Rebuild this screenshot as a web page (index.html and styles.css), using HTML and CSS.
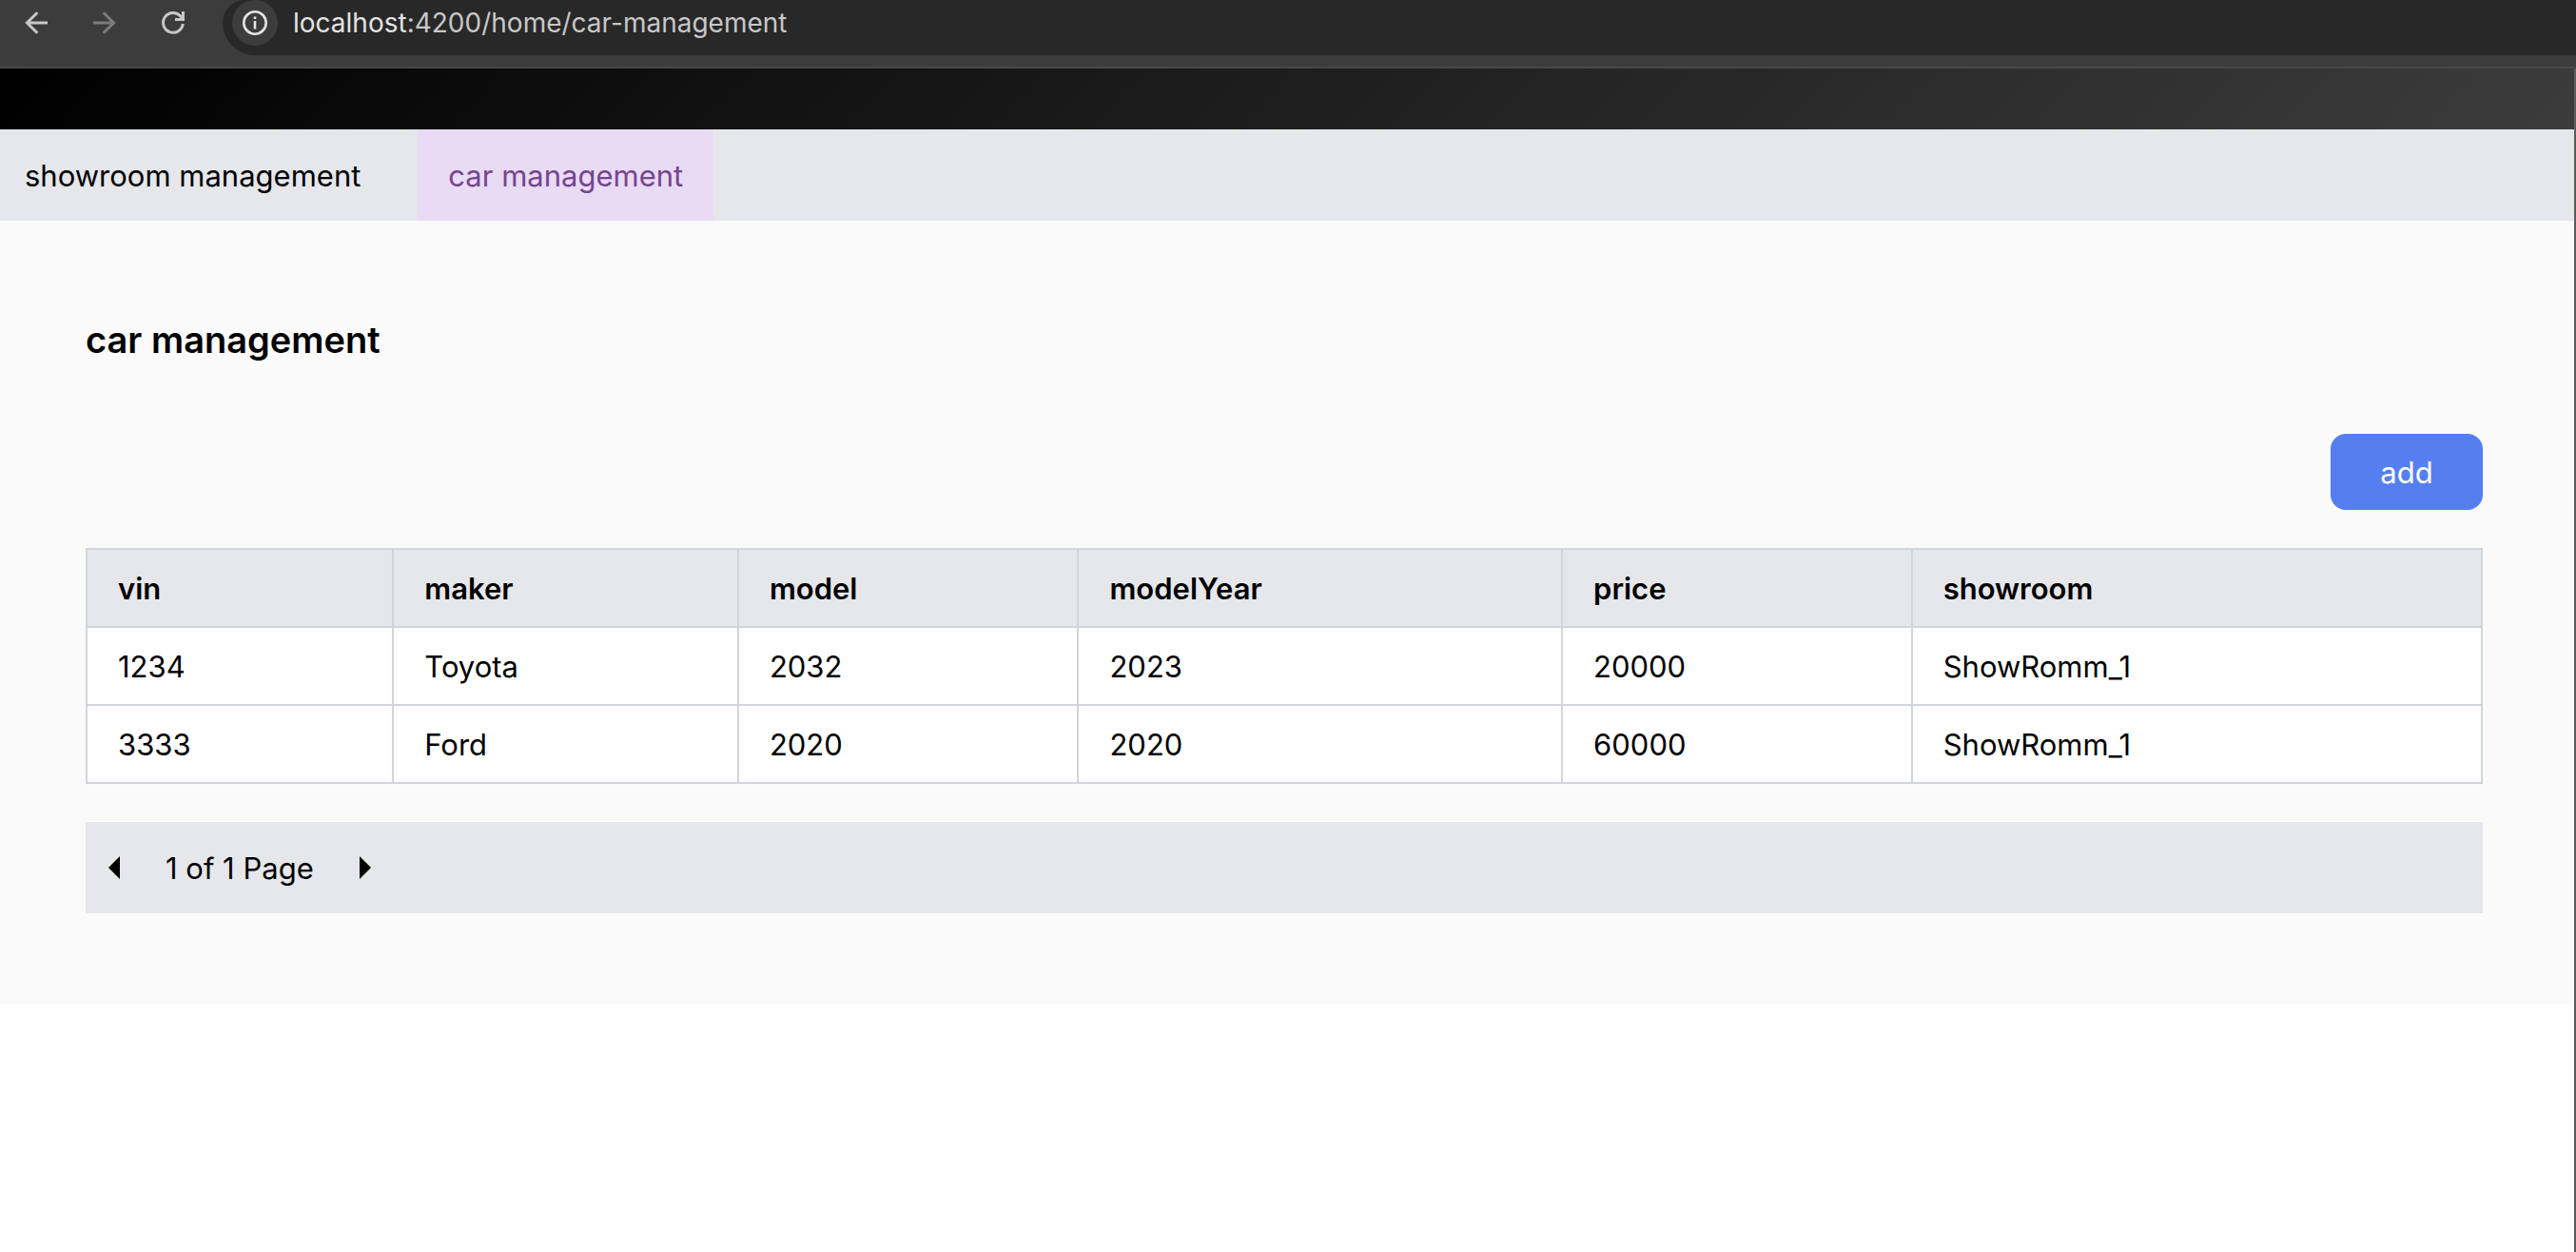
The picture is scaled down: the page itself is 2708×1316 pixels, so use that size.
FILE: index.html
```html
<!DOCTYPE html>
<html lang="en">
<head>
<meta charset="utf-8">
<meta name="viewport" content="width=device-width, initial-scale=1">
<title>car management</title>
<link rel="stylesheet" href="styles.css">
</head>
<body>
<div class="toolbar">
  <button class="tool" type="button" aria-label="Back">
    <svg viewBox="0 0 24 24" width="24" height="24" fill="none" stroke="currentColor" stroke-width="3"><path d="M24 12H2M13.300 1.200L2.400 12l10.900 10.800"/></svg>
  </button>
  <button class="tool" type="button" aria-label="Forward" disabled>
    <svg viewBox="0 0 24 24" width="24" height="24" fill="none" stroke="currentColor" stroke-width="3"><path d="M0 12h22M10.700 1.200L21.600 12l-10.900 10.800"/></svg>
  </button>
  <button class="tool" type="button" aria-label="Reload">
    <svg viewBox="0 0 24 24" width="24" height="24" fill="none" stroke="currentColor" stroke-width="3"><path d="M22.300 13A10.400 10.400 0 1 1 19.400 4.600L22 7.500M22.500 0v8.500H14"/></svg>
  </button>
  <div class="address">
    <button class="site-info" type="button" aria-label="Site information">
      <svg viewBox="0 0 26 26" width="26" height="26" fill="none" stroke="currentColor"><circle cx="13" cy="13" r="11.700" stroke-width="2.600"/><path d="M13 11v8.500M13 6.500v2.600" stroke-width="2.600"/></svg>
    </button>
    <span class="url"><span class="host">localhost</span>:4200/home/car-management</span>
  </div>
</div>
<div class="viewport">
  <header class="banner"></header>
  <nav class="tabs">
    <a class="tab" href="#showroom">showroom management</a>
    <a class="tab tab-active" href="#car" aria-current="page">car management</a>
  </nav>
  <main class="content">
    <h1 class="title">car management</h1>
    <div class="actions"><button class="add" type="button">add</button></div>
    <table class="cars">
      <colgroup><col class="col-vin"><col class="col-maker"><col class="col-model"><col class="col-year"><col class="col-price"><col></colgroup>
      <thead>
        <tr><th>vin</th><th>maker</th><th>model</th><th>modelYear</th><th>price</th><th>showroom</th></tr>
      </thead>
      <tbody>
        <tr><td>1234</td><td>Toyota</td><td>2032</td><td>2023</td><td>20000</td><td>ShowRomm_1</td></tr>
        <tr><td>3333</td><td>Ford</td><td>2020</td><td>2020</td><td>60000</td><td>ShowRomm_1</td></tr>
      </tbody>
    </table>
    <div class="pager">
      <button class="page-step" type="button" aria-label="Previous page">
        <svg viewBox="0 0 12 24" width="12" height="24" fill="currentColor"><path d="M12 0v24L0 12z"/></svg>
      </button>
      <span class="page-label">1 of 1 Page</span>
      <button class="page-step" type="button" aria-label="Next page">
        <svg viewBox="0 0 12 24" width="12" height="24" fill="currentColor"><path d="M0 0v24l12-12z"/></svg>
      </button>
    </div>
  </main>
</div>
</body>
</html>
```
FILE: styles.css
```css
* {
  box-sizing: border-box;
}

body {
  margin: 0;
  min-height: 100vh;
  display: flex;
  flex-direction: column;
  background: #fff;
  color: #000;
  font: 31px/48px Inter, "Liberation Sans", sans-serif;
}

button {
  padding: 0;
  border: 0;
  background: none;
  color: inherit;
  font: inherit;
}

svg {
  display: block;
}

.toolbar {
  display: flex;
  align-items: flex-start;
  height: 72px;
  padding-left: 14px;
  background: #3c3c3c;
  border-bottom: 2px solid #484848;
}

.tool {
  display: grid;
  place-items: center;
  width: 48px;
  height: 48px;
  margin-right: 24px;
  color: #c7c7c7;
}

.tool:disabled {
  color: #7c7c7c;
}

.address {
  display: flex;
  flex: 1;
  gap: 16px;
  height: 58px;
  padding-left: 10px;
  margin-left: 4px;
  background: #282828;
  border-radius: 24px 0 0 34px;
}

.site-info {
  display: grid;
  place-items: center;
  width: 48px;
  height: 48px;
  border-radius: 50%;
  background: #3c3c3c;
  color: #e3e3e3;
}

.url {
  color: #c7c7c7;
  font-size: 28px;
}

.host {
  color: #e3e3e3;
}

.viewport {
  flex: 1;
  border-right: 2px solid #5c5c5c;
}

.banner {
  height: 64px;
  background: linear-gradient(135deg, #000, #3c3c3c);
}

.tabs {
  display: flex;
  gap: 30px;
  background: #e5e7eb;
}

.tab {
  padding: 25px 32px 23px;
  color: #000;
  text-decoration: none;
}

.tab:first-child {
  padding-right: 30px;
  padding-left: 26px;
}

.tab-active {
  background: #e9dbf4;
  color: #75468f;
}

.content {
  padding: 97px 96px 96px 90px;
  background: #fafafa;
}

.title {
  margin: 0;
  font-size: 38px;
  line-height: 56px;
  font-weight: 600;
}

.actions {
  display: flex;
  justify-content: flex-end;
  padding: 71px 0 40px;
}

.add {
  width: 160px;
  height: 80px;
  padding-top: 2px;
  border-radius: 16px;
  background: #557ff1;
  color: #fff;
}

.cars {
  width: 100%;
  table-layout: fixed;
  border-collapse: collapse;
  background: #fff;
}

.col-vin {
  width: 12.8%;
}

.col-maker {
  width: 14.4%;
}

.col-model {
  width: 14.2%;
}

.col-year {
  width: 20.2%;
}

.col-price {
  width: 14.6%;
}

.cars th,
.cars td {
  padding: 17px 32px 15px;
  border: 2px solid #d1d5db;
  text-align: left;
}

.cars th {
  background: #e5e7eb;
  font-weight: 600;
}

.pager {
  display: flex;
  align-items: center;
  gap: 32px;
  margin-top: 40px;
  padding: 24px 8px;
  background: #e5e7eb;
}

.page-label {
  padding-top: 2px;
  line-height: 46px;
}

.page-step {
  display: grid;
  place-items: center;
  width: 44px;
  height: 48px;
}
```
